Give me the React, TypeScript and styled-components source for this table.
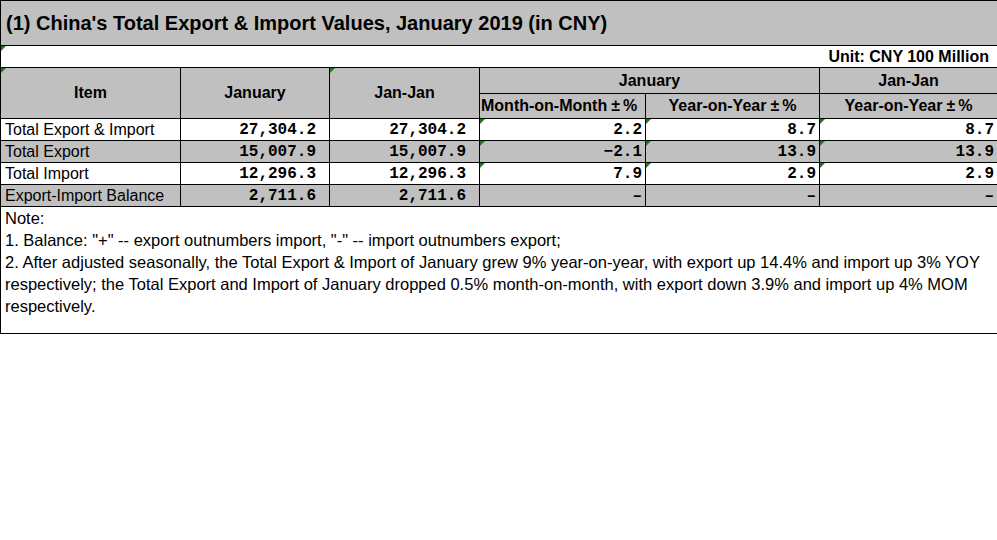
import React from 'react'
import styled, { createGlobalStyle, css } from 'styled-components'

const GlobalStyle = createGlobalStyle`
  html, body {
    margin: 0;
    padding: 0;
    background: #ffffff;
  }
  body {
    font-family: 'Liberation Sans', Arial, sans-serif;
    color: #000;
  }
`

const GREY = '#c0c0c0'

type Row = {
  label: string
  jan: string
  janJan: string
  mom: string
  yoy: string
  yoyCum: string
  grey?: boolean
  flagged?: boolean
}

const rows: Row[] = [
  { label: 'Total Export & Import', jan: '27,304.2', janJan: '27,304.2', mom: '2.2', yoy: '8.7', yoyCum: '8.7', flagged: true },
  { label: 'Total Export', jan: '15,007.9', janJan: '15,007.9', mom: '\u22122.1', yoy: '13.9', yoyCum: '13.9', grey: true, flagged: true },
  { label: 'Total Import', jan: '12,296.3', janJan: '12,296.3', mom: '7.9', yoy: '2.9', yoyCum: '2.9', flagged: true },
  { label: 'Export-Import Balance', jan: '2,711.6', janJan: '2,711.6', mom: '–', yoy: '–', yoyCum: '–', grey: true },
]

const Sheet = styled.table`
  width: 997px;
  table-layout: fixed;
  border-collapse: collapse;
  border: 1px solid #000;
`

const flag = css`
  &::before {
    content: '';
    position: absolute;
    left: 0;
    top: 0;
    border-top: 5px solid #1f7a1f;
    border-right: 5px solid transparent;
  }
`

const Cell = styled.td<{ $grey?: boolean; $flag?: boolean; $align?: 'left' | 'center' | 'right' }>`
  position: relative;
  border: 1px solid #000;
  padding: 0 4px;
  height: 21px;
  background: ${(p) => (p.$grey ? GREY : '#fff')};
  text-align: ${(p) => p.$align || 'left'};
  white-space: nowrap;
  overflow: hidden;
  ${(p) => p.$flag && flag}
`

const TitleCell = styled(Cell)`
  height: 44px;
  padding: 0 5px;
  font-size: 20px;
  font-weight: bold;
  background: ${GREY};
`

const UnitCell = styled(Cell)`
  font-size: 16px;
  font-weight: bold;
  padding-right: 8px;
`

const HeadCell = styled(Cell)<{ $h?: number }>`
  background: ${GREY};
  font-size: 16px;
  font-weight: bold;
  text-align: center;
  height: ${(p) => p.$h || 24}px;
  padding: 0 1px;
`

const Pm = styled.span`
  margin: 0 3px 0 4px;
`

const Label = styled(Cell)`
  font-size: 16px;
  padding-left: 4px;
`

const Num = styled(Cell)<{ $pad?: number }>`
  font-family: 'Liberation Mono', 'DejaVu Sans Mono', monospace;
  font-weight: bold;
  font-size: 16px;
  text-align: right;
  padding-right: ${(p) => p.$pad ?? 3}px;
`

const NoteCell = styled(Cell)`
  height: 126px;
  vertical-align: top;
  white-space: normal;
  font-size: 16.5px;
  line-height: 22px;
  padding: 0 4px;
`

const Line = styled.div``

const Change = ({ label }: { label: string }) => (
  <>
    {label}
    <Pm>±</Pm>%
  </>
)

export default function App() {
  return (
    <>
      <GlobalStyle />
      <Sheet>
        <colgroup>
          <col style={{ width: 180 }} />
          <col style={{ width: 149 }} />
          <col style={{ width: 150 }} />
          <col style={{ width: 166 }} />
          <col style={{ width: 174 }} />
          <col style={{ width: 178 }} />
        </colgroup>
        <tbody>
          <tr>
            <TitleCell colSpan={6}>(1) China's Total Export &amp; Import Values, January 2019 (in CNY)</TitleCell>
          </tr>
          <tr>
            <UnitCell colSpan={6} $align="right" $flag>
              Unit: CNY 100 Million
            </UnitCell>
          </tr>
          <tr>
            <HeadCell rowSpan={2} $flag>Item</HeadCell>
            <HeadCell rowSpan={2}>January</HeadCell>
            <HeadCell rowSpan={2} $flag>Jan-Jan</HeadCell>
            <HeadCell colSpan={2} $h={25}>January</HeadCell>
            <HeadCell $h={25}>Jan-Jan</HeadCell>
          </tr>
          <tr>
            <HeadCell $align="left" style={{ textAlign: 'left' }}>
              <Change label="Month-on-Month" />
            </HeadCell>
            <HeadCell>
              <Change label="Year-on-Year" />
            </HeadCell>
            <HeadCell>
              <Change label="Year-on-Year" />
            </HeadCell>
          </tr>
          {rows.map((r) => (
            <tr key={r.label}>
              <Label $grey={r.grey}>{r.label}</Label>
              <Num $grey={r.grey} $pad={13}>{r.jan}</Num>
              <Num $grey={r.grey} $pad={13}>{r.janJan}</Num>
              <Num $grey={r.grey} $flag={r.flagged}>{r.mom}</Num>
              <Num $grey={r.grey} $flag={r.flagged}>{r.yoy}</Num>
              <Num $grey={r.grey} $flag={r.flagged}>{r.yoyCum}</Num>
            </tr>
          ))}
          <tr>
            <NoteCell colSpan={6}>
              <Line>Note:</Line>
              <Line>1. Balance: "+" -- export outnumbers import, "-" -- import outnumbers export;</Line>
              <Line>
                2. After adjusted seasonally, the Total Export &amp; Import of January grew 9% year-on-year, with export up
                14.4% and import up 3% YOY respectively; the Total Export and Import of January dropped 0.5% month-on-month,
                with export down 3.9% and import up 4% MOM respectively.
              </Line>
            </NoteCell>
          </tr>
        </tbody>
      </Sheet>
    </>
  )
}
